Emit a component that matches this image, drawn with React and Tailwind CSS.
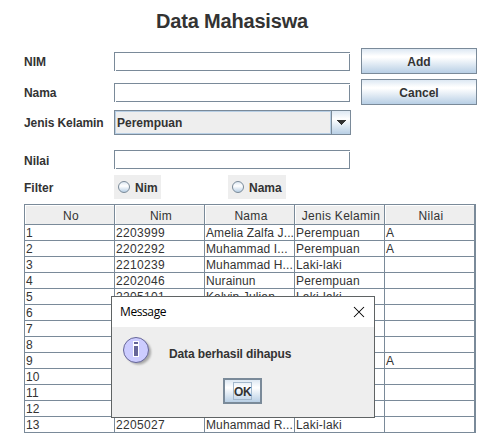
const rows = [
  ["1", "2203999", "Amelia Zalfa J...", "Perempuan", "A"],
  ["2", "2202292", "Muhammad I...", "Perempuan", "A"],
  ["3", "2210239", "Muhammad H...", "Laki-laki", ""],
  ["4", "2202046", "Nurainun", "Perempuan", ""],
  ["5", "2205101", "Kelvin Julian", "Laki-laki", ""],
  ["6", "", "", "", ""],
  ["7", "", "", "", ""],
  ["8", "", "", "", ""],
  ["9", "", "", "", "A"],
  ["10", "", "", "", ""],
  ["11", "", "", "", ""],
  ["12", "", "", "", ""],
  ["13", "2205027", "Muhammad R...", "Laki-laki", ""],
];

const headers = ["No", "Nim", "Nama", "Jenis Kelamin", "Nilai"];

const tracking = ["tracking-[0.2px]", "tracking-[0.33px]", "tracking-[0.12px]", "tracking-[0.2px]", ""];

function Label({ children, className = "" }) {
  return <label className={`w-[90px] shrink-0 pt-[2px] leading-[14px] ${className}`}>{children}</label>;
}

// Metal-style bevel: the bottom edge starts 2px in and the right edge starts 2px down.
function Field() {
  return (
    <input className="block h-[19px] w-[236px] shrink-0 outline-none [background:linear-gradient(#7a8a99,#7a8a99)_0_0/100%_1px_no-repeat,linear-gradient(#7a8a99,#7a8a99)_0_0/1px_100%_no-repeat,linear-gradient(#7a8a99,#7a8a99)_100%_100%/234px_1px_no-repeat,linear-gradient(#7a8a99,#7a8a99)_100%_100%/1px_17px_no-repeat,#ffffff]" />
  );
}

function Button({ children, className = "" }) {
  return (
    <button
      className={`ml-[11px] h-[26px] w-[116px] border border-[#7a8a99] bg-[linear-gradient(#dde8f3_0%,#ffffff_30%,#ffffff_35%,#b8cfe5_100%)] pt-px font-bold leading-[14px] ${className}`}
    >
      {children}
    </button>
  );
}

function Radio({ children, className }) {
  return (
    <div className={`flex h-6 items-center bg-[#eeeeee] pl-1 ${className}`}>
      <span className="size-3 shrink-0 rounded-full border border-[#7a8a99] bg-[linear-gradient(#dde8f3_0%,#ffffff_40%,#b8cfe5_100%)]" />
      <span className="ml-[5px] pt-px leading-[14px]">{children}</span>
    </div>
  );
}

function MessageDialog() {
  return (
    <div className="absolute left-[111px] top-[296px] h-[122px] w-[264px] border border-[#5f6364] bg-[#eeeeee]">
      <div className="flex h-[30px] items-center justify-between bg-white pl-2 pr-[9px]">
        <span className="font-['Open_Sans','Noto_Sans',sans-serif] text-[12px] font-normal tracking-[-0.4px] text-black">Message</span>
        <svg width="12" height="12" viewBox="0 0 12 12" fill="none" stroke="#000000" strokeWidth="1.05">
          <path d="M1 1 11 11M11 1 1 11" />
        </svg>
      </div>
      <div className="flex pl-[10px] pt-[8px]">
        <svg width="32" height="32" viewBox="0 0 32 32" className="shrink-0">
          <defs>
            <filter id="soft" x="-20%" y="-20%" width="150%" height="150%">
              <feGaussianBlur stdDeviation="1.3" />
            </filter>
          </defs>
          <circle cx="16.5" cy="17" r="12.5" fill="#777777" opacity=".6" filter="url(#soft)" />
          <circle cx="14" cy="15" r="12.5" fill="#ccccff" stroke="#666699" />
          <path d="M11 6h6v5h-6zM11 10h6v12h-6z" fill="#ffffff" />
          <path d="M12 7h4v2h-4zM12 11h4v10h-4z" fill="#666699" />
        </svg>
        <span className="ml-[15px] mt-[12px] leading-[14px] tracking-[-0.12px]">Data berhasil dihapus</span>
      </div>
      <button className="ml-[111px] mt-[11px] flex h-[26px] w-[39px] items-center justify-center border-2 border-[#7a8a99] bg-[linear-gradient(#dde8f3_0%,#ffffff_35%,#b8cfe5_100%)] font-bold">
        <span className="h-[18px] w-[19px] border border-[#a3b8cc] pt-px text-center leading-[16px] tracking-[-0.3px]">OK</span>
      </button>
    </div>
  );
}

export default function App() {
  return (
    <main className="relative h-[433px] w-[495px] overflow-hidden bg-white pl-6 font-['Liberation_Sans',Arial,sans-serif] text-[12px] font-bold text-[#333333]">
      <h1 className="h-12 pl-[132px] pt-[9px] text-[20px] font-bold leading-6 tracking-[-0.18px]">Data Mahasiswa</h1>
      <form className="h-[156px]">
        <div className="flex h-[26px] items-center">
          <Label>NIM</Label>
          <Field />
          <Button>Add</Button>
        </div>
        <div className="mt-[5px] flex h-[26px] items-center">
          <Label className="tracking-[-0.1px]">Nama</Label>
          <Field />
          <Button>Cancel</Button>
        </div>
        <div className="mt-[5px] flex h-[25px] items-center">
          <Label className="pt-px tracking-[-0.09px]">Jenis Kelamin</Label>
          <div className="flex h-[25px] w-[237px] border border-[#7a8a99] bg-[#eeeeee]">
            <div className="w-[216px] border border-[#b8cfe5] pl-px pt-[3px] leading-[16px]">Perempuan</div>
            <div className="flex w-[19px] items-center justify-center border-l border-[#7a8a99] bg-[linear-gradient(#dde8f3_0%,#ffffff_35%,#b8cfe5_100%)]">
              <svg width="10" height="5" viewBox="0 0 10 5" fill="#333333" shapeRendering="crispEdges">
                <path d="M0 0h10L5 5z" />
              </svg>
            </div>
          </div>
        </div>
        <div className="mt-[15px] flex h-[19px] items-center">
          <Label>Nilai</Label>
          <Field />
        </div>
        <div className="mt-[6px] flex h-6 items-center">
          <Label>Filter</Label>
          <Radio className="w-[47px]">Nim</Radio>
          <Radio className="ml-[67px] w-[58px]">Nama</Radio>
        </div>
      </form>
      <table className="w-[452px] table-fixed border-separate border-spacing-0 border-l border-r-2 border-t border-[#7a8a99] font-normal">
        <colgroup>
          <col className="w-[90px]" />
          <col className="w-[90px]" />
          <col className="w-[90px]" />
          <col className="w-[90px]" />
          <col />
        </colgroup>
        <thead>
          <tr className="h-5">
            {headers.map((name) => (
              <th
                key={name}
                className="h-5 border-b border-r border-[#7a8a99] bg-[#eeeeee] p-0 pl-[3px] pt-[3px] text-center font-normal leading-[15px] tracking-[0.3px] shadow-[inset_1px_1px_0_#ffffff] last:border-r-0"
              >
                {name}
              </th>
            ))}
          </tr>
        </thead>
        <tbody>
          {rows.map((row) => (
            <tr key={row[0]} className="h-4">
              {row.map((value, index) => (
                <td
                  key={index}
                  className={`h-4 overflow-hidden whitespace-nowrap border-b border-r border-[#7a8a99] p-0 pl-px pt-px leading-[14px] last:border-r-0 ${tracking[index]}`}
                >
                  {value}
                </td>
              ))}
            </tr>
          ))}
        </tbody>
      </table>
      <MessageDialog />
    </main>
  );
}
